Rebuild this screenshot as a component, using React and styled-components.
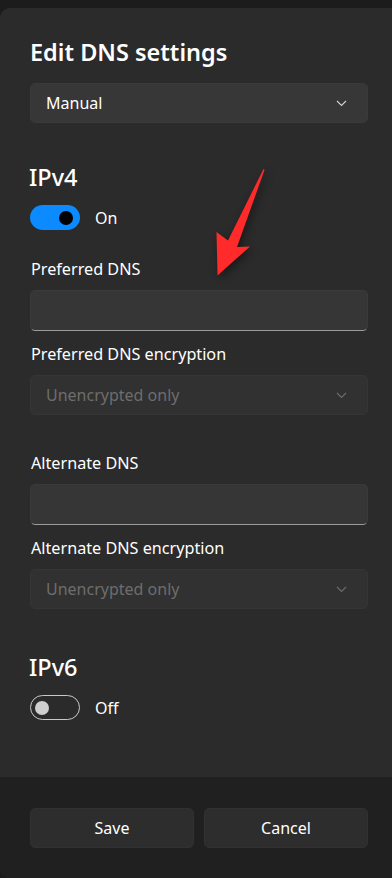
import styled, { createGlobalStyle } from "styled-components";

const GlobalStyle = createGlobalStyle`
  html, body {
    margin: 0;
    padding: 0;
    background: #1c1c1c;
  }
  * {
    box-sizing: border-box;
  }
`;

const Page = styled.div`
  height: 878px;
  padding-top: 8px;
  font-family: "Noto Sans", "Open Sans", sans-serif;
  color: #ffffff;
  overflow: hidden;
`;

const Dialog = styled.div`
  position: relative;
  height: 870px;
  background: #2b2b2b;
  border-radius: 10px 0 0 10px;
  overflow: hidden;
  display: flex;
  flex-direction: column;
`;

const Body = styled.div`
  flex: 1;
  padding: 26px 24px 0 30px;
  display: flex;
  flex-direction: column;
`;

const Title = styled.h1`
  margin: 0 0 13px 0;
  height: 36px;
  line-height: 36px;
  font-size: 23.5px;
  font-weight: 600;
`;

const Heading = styled.h2`
  margin: ${(p) => p.$top}px 0 10px -1px;
  height: 36px;
  line-height: 36px;
  font-size: 23.5px;
  font-weight: 500;
`;

const Label = styled.div`
  margin: ${(p) => p.$top}px 0 9px 1px;
  height: 24px;
  line-height: 24px;
  font-size: 16.2px;
`;

const Select = styled.div`
  height: 40px;
  border-radius: 5px;
  padding: 0 20px 0 15px;
  display: flex;
  align-items: center;
  justify-content: space-between;
  font-size: 16px;
  background: ${(p) => (p.$disabled ? "#313131" : "#373737")};
  border: 1px solid ${(p) => (p.$disabled ? "#353535" : "#3a3a3a")};
  color: ${(p) => (p.$disabled ? "#6d6d6d" : "#ffffff")};
`;

const Input = styled.div`
  height: 41px;
  border-radius: 5px;
  background: #363636;
  border: 1px solid #3a3a3a;
  border-bottom: 1px solid #9c9c9c;
`;

const ToggleRow = styled.div`
  display: flex;
  align-items: center;
  gap: 15px;
  font-size: 16px;
`;

const Track = styled.div`
  width: 50px;
  height: 25px;
  border-radius: 13px;
  display: flex;
  align-items: center;
  padding: 0 ${(p) => (p.$on ? "7px" : "4px")};
  justify-content: ${(p) => (p.$on ? "flex-end" : "flex-start")};
  background: ${(p) => (p.$on ? "#0b8bff" : "transparent")};
  border: ${(p) => (p.$on ? "none" : "1.5px solid #c9c9c9")};
`;

const Knob = styled.div`
  width: 14px;
  height: 14px;
  border-radius: 50%;
  background: ${(p) => (p.$on ? "#000000" : "#cfcfcf")};
`;

const Footer = styled.div`
  height: 101px;
  background: #202020;
  padding: 31px 24px 0 30px;
  display: grid;
  grid-template-columns: 1fr 1fr;
  gap: 10px;
  align-content: start;
`;

const Button = styled.button`
  height: 40px;
  border: 1px solid #313131;
  border-radius: 5px;
  background: #2d2d2d;
  color: #ffffff;
  font-family: "Noto Sans", "Open Sans", sans-serif;
  font-size: 16px;
`;

const Arrow = styled.svg`
  position: absolute;
  left: 210px;
  top: 150px;
  filter: drop-shadow(2px 3px 4px rgba(0, 0, 0, 0.45));
`;

const Chevron = ({ color }) => (
  <svg width="11" height="7" viewBox="0 0 11 7">
    <path d="M1 1 L5.5 5.5 L10 1" fill="none" stroke={color} strokeWidth="1.1" />
  </svg>
);

const Toggle = ({ on, text }) => (
  <ToggleRow>
    <Track $on={on}>
      <Knob $on={on} />
    </Track>
    {text}
  </ToggleRow>
);

export default function App() {
  return (
    <>
      <GlobalStyle />
      <Page>
        <Dialog>
          <Body>
            <Title>Edit DNS settings</Title>
            <Select>
              Manual
              <Chevron color="#d0d0d0" />
            </Select>

            <Heading $top={36}>IPv4</Heading>
            <Toggle on text="On" />

            <Label $top={27}>Preferred DNS</Label>
            <Input />
            <Label $top={11}>Preferred DNS encryption</Label>
            <Select $disabled>
              Unencrypted only
              <Chevron color="#6d6d6d" />
            </Select>

            <Label $top={36}>Alternate DNS</Label>
            <Input />
            <Label $top={11}>Alternate DNS encryption</Label>
            <Select $disabled>
              Unencrypted only
              <Chevron color="#6d6d6d" />
            </Select>

            <Heading $top={40}>IPv6</Heading>
            <Toggle text="Off" />
          </Body>
          <Footer>
            <Button>Save</Button>
            <Button>Cancel</Button>
          </Footer>
          <Arrow width="70" height="130" viewBox="210 150 70 130">
            <path
              d="M263.5 161 L264.5 162 L237 239 L250 238.5 L217.5 267.5 L216.5 224 L228 232.5 Z"
              fill="#ff2b2b"
            />
          </Arrow>
        </Dialog>
      </Page>
    </>
  );
}
